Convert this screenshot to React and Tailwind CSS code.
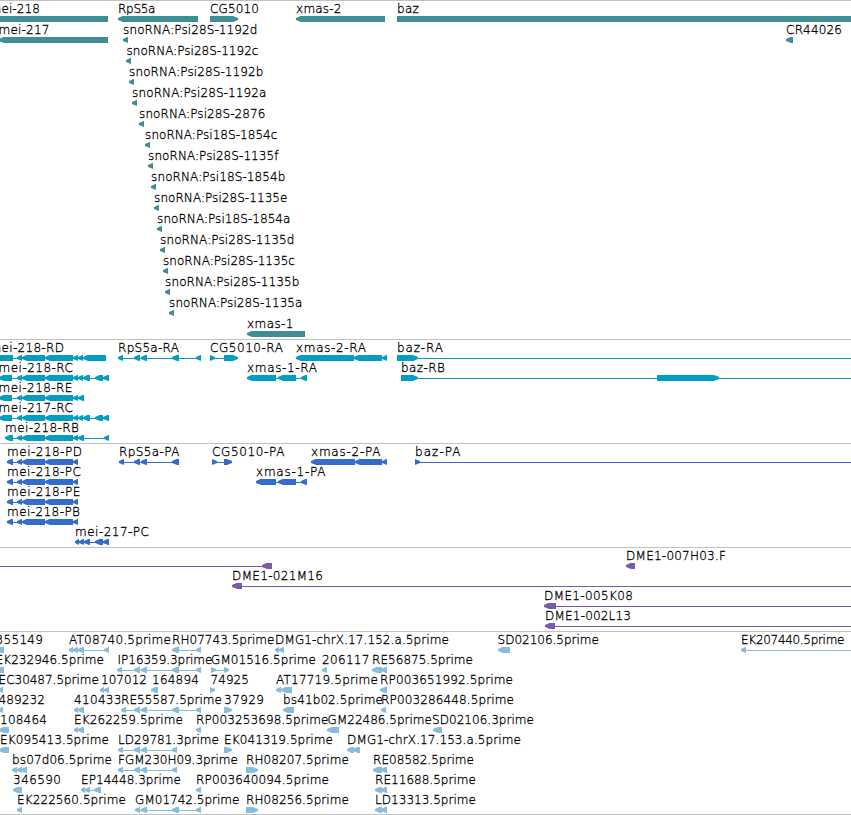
const END = 860;

// feature: { row, name, x: [start, end] of the label, segs: [start, end][], dir, line: [start, end] }
const f = (row, name, x, segs, opts = {}) => ({ row, name, x, segs, dir: 'left', ...opts });

const right = { dir: 'right' };
const flat = { dir: 'none' };

const SNO_RNAS = [
  ['1192d', '28S', 123.5, 257, 123],
  ['1192c', '28S', 127, 258, 126],
  ['1192b', '28S', 129.5, 263, 129],
  ['1192a', '28S', 132.5, 266, 132],
  ['2876', '28S', 139.5, 265, 139],
  ['1854c', '18S', 145.5, 277, 145],
  ['1135f', '28S', 148.5, 278, 148],
  ['1854b', '18S', 151.5, 285, 151],
  ['1135e', '28S', 154.5, 287, 154],
  ['1854a', '18S', 157.5, 290, 157],
  ['1135d', '28S', 160.5, 294, 160],
  ['1135c', '28S', 163.5, 294.5, 163],
  ['1135b', '28S', 165.5, 299, 165],
  ['1135a', '28S', 169.5, 302, 169],
];

const MEI_CORE = [[17, 22], [22, 45], [45, 73], [73, 78]];
const MEI_FULL = [[-1, 12], ...MEI_CORE, [78, 83], [83, 90], [95, 103], [103, 109]];
const MEI_P = [[7, 13], ...MEI_CORE];
const RPS = [[134, 140], [141, 147], [172, 179], [196, 201]];
const RPS_SHORT = [[118, 123], [134, 140], [141, 147], [172, 177]];

const TRACKS = [
  {
    id: 'genes',
    height: 'h-[339px]',
    color: 'fill-[#3e8e93]',
    pitch: 21,
    features: [
      f(0, 'mei-218', [-10, 39.5], [[-9, 108]], flat),
      f(0, 'RpS5a', [118.5, 155], [[118, 198]]),
      f(0, 'CG5010', [210.5, 258.5], [[210, 238]], right),
      f(0, 'xmas-2', [296.5, 341], [[296, 385]]),
      f(0, 'baz', [397.5, 418.5], [[397, END]], flat),
      f(1, 'mei-217', [-1, 49], [[-1, 108]]),
      f(1, 'CR44026', [786.5, 841.5], [[786, 793]]),
      ...SNO_RNAS.map(([id, unit, start, end, tip], i) =>
        f(i + 1, `snoRNA:Psi${unit}-${id}`, [start, end], [[tip, tip + 5]])
      ),
      f(15, 'xmas-1', [247.5, 293], [[247, 305]]),
    ],
  },
  {
    id: 'transcripts',
    height: 'h-[104px]',
    color: 'fill-[#029fc1]',
    pitch: 20,
    features: [
      f(0, 'mei-218-RD', [-10, 63.5], [[-8, 13], ...MEI_CORE, [78, 83], [83, 106]]),
      f(0, 'RpS5a-RA', [118.5, 178.5], [[118, 123], ...RPS]),
      f(0, 'CG5010-RA', [210.5, 282.5], [[210, 215], [224, 238]], right),
      f(0, 'xmas-2-RA', [296.5, 365.5], [[296, 354], [354, 382], [382, 387]]),
      f(0, 'baz-RA', [397.5, 442.5], [[397, 418]], { dir: 'right', line: [397, END] }),
      f(1, 'mei-218-RC', [-1, 72.5], MEI_FULL),
      f(1, 'xmas-1-RA', [247.5, 316.5], [[247, 276], [278, 296], [301, 307]]),
      f(1, 'baz-RB', [401.5, 444.5], [[401, 418], [657, 719]], { dir: 'right', line: [401, END] }),
      f(2, 'mei-218-RE', [-1, 72], [[-1, 12], ...MEI_CORE, [78, 84]]),
      f(3, 'mei-217-RC', [-1, 72.5], MEI_FULL),
      f(4, 'mei-218-RB', [5.5, 78.5], [[5, 13], ...MEI_CORE, [78, 84], [104, 109]]),
    ],
  },
  {
    id: 'proteins',
    height: 'h-[104px]',
    color: 'fill-[#326dcd]',
    pitch: 20,
    features: [
      f(0, 'mei-218-PD', [7.5, 81.5], MEI_P),
      f(0, 'RpS5a-PA', [119.5, 179], [[119, 124], [134, 140], [141, 147], [172, 179]]),
      f(0, 'CG5010-PA', [212.5, 284], [[212, 217], [224, 232]], right),
      f(0, 'xmas-2-PA', [311.5, 380], [[311, 355], [355, 382], [382, 387]]),
      f(0, 'baz-PA', [415.5, 460], [[415, 420]], { dir: 'right', line: [415, END] }),
      f(1, 'mei-218-PC', [7.5, 80.5], MEI_P),
      f(1, 'xmas-1-PA', [256.5, 325], [[256, 276], [278, 296], [301, 307]]),
      f(2, 'mei-218-PE', [7.5, 80], MEI_P),
      f(3, 'mei-218-PB', [7.5, 79.5], MEI_P),
      f(4, 'mei-217-PC', [75.5, 148.5], [[75, 79], [79, 84], [84, 90], [95, 103], [103, 109]]),
    ],
  },
  {
    id: 'clones',
    height: 'h-[84px]',
    color: 'fill-[#775aa8]',
    pitch: 20,
    features: [
      f(0, '', [0, 0], [[262, 272]], { line: [-1, 272] }),
      f(0, 'DME1-007H03.F', [626.5, 725.5], [[626, 635]]),
      f(1, 'DME1-021M16', [232.5, 322.5], [[232, 242]], { line: [232, END] }),
      f(2, 'DME1-005K08', [544.5, 632.5], [[544, 556]], { line: [544, END] }),
      f(3, 'DME1-002L13', [545.5, 630.5], [[545, 555]], { line: [545, END] }),
    ],
  },
  {
    id: 'ests',
    height: 'h-[183px]',
    color: 'fill-[#87bcdd]',
    pitch: 20,
    features: [
      f(0, '355149', [-4, 42.5], [[-6, 4]], flat),
      f(0, 'AT08740.5prime', [69.5, 170.5], [[69, 73], [73, 78], [78, 84], [104, 109]]),
      f(0, 'RH07743.5prime', [172.5, 274], [[172, 179], [196, 201]]),
      f(0, 'DMG1-chrX.17.152.a.5prime', [275.5, 448.5], [[275, 279], [279, 284]]),
      f(0, 'SD02106.5prime', [498, 598.5], [[498, 510]]),
      f(0, 'EK207440.5prime', [741.5, 844], [[741, 746]], { line: [741, END] }),

      f(1, 'EK232946.5prime', [-4, 103.5], [[-6, 4]], flat),
      f(1, 'IP16359.3prime', [118, 212], [[117, 122], ...RPS]),
      f(1, 'GM01516.5prime', [211.5, 315.5], [[211, 216], [224, 229]], right),
      f(1, '206117', [322.5, 369], [[322, 327]]),
      f(1, 'RE56875.5prime', [372.5, 472.5], [[372, 382], [381, 387]]),

      f(2, 'EC30487.5prime', [-1, 98.5], [[-2, 3]]),
      f(2, '107012', [101.5, 146.5], [[100, 104], [104, 109]]),
      f(2, '164894', [152.5, 198.5], [[151, 158]]),
      f(2, '74925', [211, 248.5], [[210, 215]], right),
      f(2, 'AT17719.5prime', [276.5, 377.5], [[276, 281], [281, 292]]),
      f(2, 'RP003651992.5prime', [380.5, 512.5], [[380, 387]]),

      f(3, '489232', [-1, 44.5], [[-2, 3]]),
      f(3, '410433', [74.5, 121], [[74, 78], [78, 84]]),
      f(3, 'RE55587.5prime', [121.5, 221.5], [[121, 126], ...RPS]),
      f(3, '37929', [224.5, 263.5], [[224, 232]], right),
      f(3, 'bs41b02.5prime', [283.5, 382.5], [[283, 294]]),
      f(3, 'RP003286448.5prime', [381.5, 513.5], [[381, 386]]),

      f(4, '108464', [0.5, 46.5], [[-1, 9]]),
      f(4, 'EK262259.5prime', [74.5, 182.5], [[74, 78], [78, 84]]),
      f(4, 'RP003253698.5prime', [196.5, 328], [[196, 201]]),
      f(4, 'GM22486.5prime', [328, 431.5], [[327, 339]]),
      f(4, 'SD02106.3prime', [432.5, 533.5], [[433, 442]]),

      f(5, 'EK095413.5prime', [0.5, 108.5], [[-1, 9]]),
      f(5, 'LD29781.3prime', [118.5, 218.5], RPS_SHORT),
      f(5, 'EK041319.5prime', [224.5, 332.5], [[224, 232]], right),
      f(5, 'DMG1-chrX.17.153.a.5prime', [347.5, 520.5], [[347, 354], [353, 360]]),

      f(6, 'bs07d06.5prime', [12.5, 111.5], [[12, 17], [17, 22], [21, 27]]),
      f(6, 'FGM230H09.3prime', [118.5, 237.5], RPS_SHORT),
      f(6, 'RH08207.5prime', [246.5, 348.5], [[246, 258]], right),
      f(6, 'RE08582.5prime', [373.5, 473.5], [[373, 382], [381, 387]]),

      f(7, '346590', [13.5, 60.5], [[13, 22]]),
      f(7, 'EP14448.3prime', [81.5, 180.5], [[81, 85], [85, 90], [94, 101]]),
      f(7, 'RP003640094.5prime', [196.5, 328.5], [[196, 201]]),
      f(7, 'RE11688.5prime', [375.5, 475.5], [[375, 382], [381, 387]]),

      f(8, 'EK222560.5prime', [17.5, 125.5], [[17, 22]]),
      f(8, 'GM01742.5prime', [135.5, 239], [[135, 140], [141, 147], [172, 179], [196, 201]]),
      f(8, 'RH08256.5prime', [246.5, 348.5], [[246, 258]], right),
      f(8, 'LD13313.5prime', [375.5, 475.5], [[375, 382], [381, 387]]),
    ],
  },
];

// a bar six pixels high with a pointed end
function segmentPoints(a, b, dir, y) {
  const head = Math.min(5, b - a);
  const y2 = y + 6;
  if (dir === 'left') {
    return `${a},${y + 2} ${a + head},${y - 0.3} ${a + head},${y} ${b},${y} ${b},${y2} ${a + head},${y2} ${a},${y + 4}`;
  }
  if (dir === 'right') {
    return `${a},${y} ${b - head},${y} ${b},${y + 2} ${b},${y + 4} ${b - head},${y2} ${a},${y2}`;
  }
  return `${a},${y} ${b},${y} ${b},${y2} ${a},${y2}`;
}

function Feature({ feature, pitch }) {
  const { row, name, x, segs, dir } = feature;
  const top = row * pitch;
  const [from, to] = feature.line || [segs[0][0], segs[segs.length - 1][1]];

  return (
    <g>
      <rect x={from + 1} y={top + 18} width={to - from - 1} height="1" shapeRendering="crispEdges" />
      {segs.map(([a, b], i) => (
        <polygon key={i} points={segmentPoints(a, b, dir, top + 15)} />
      ))}
      {name && (
        <text
          x={x[0] - 0.4}
          y={top + 12}
          textLength={x[1] - x[0] + 0.8}
          className="fill-black stroke-black stroke-[0.3px] text-[12px] font-extralight"
        >
          {name}
        </text>
      )}
    </g>
  );
}

function Track({ track }) {
  return (
    <section className={`w-full shrink-0 border-t border-[#c0c0c0] ${track.height}`}>
      <svg className={`block w-full h-full ${track.color}`}>
        {track.features.map((feature, i) => (
          <Feature key={i} feature={feature} pitch={track.pitch} />
        ))}
      </svg>
    </section>
  );
}

export default function App() {
  return (
    <main className="flex flex-col w-[851px] h-[815px] overflow-hidden bg-white border-b border-[#c0c0c0] font-['DejaVu_Sans',sans-serif]">
      {TRACKS.map((track) => (
        <Track key={track.id} track={track} />
      ))}
    </main>
  );
}
